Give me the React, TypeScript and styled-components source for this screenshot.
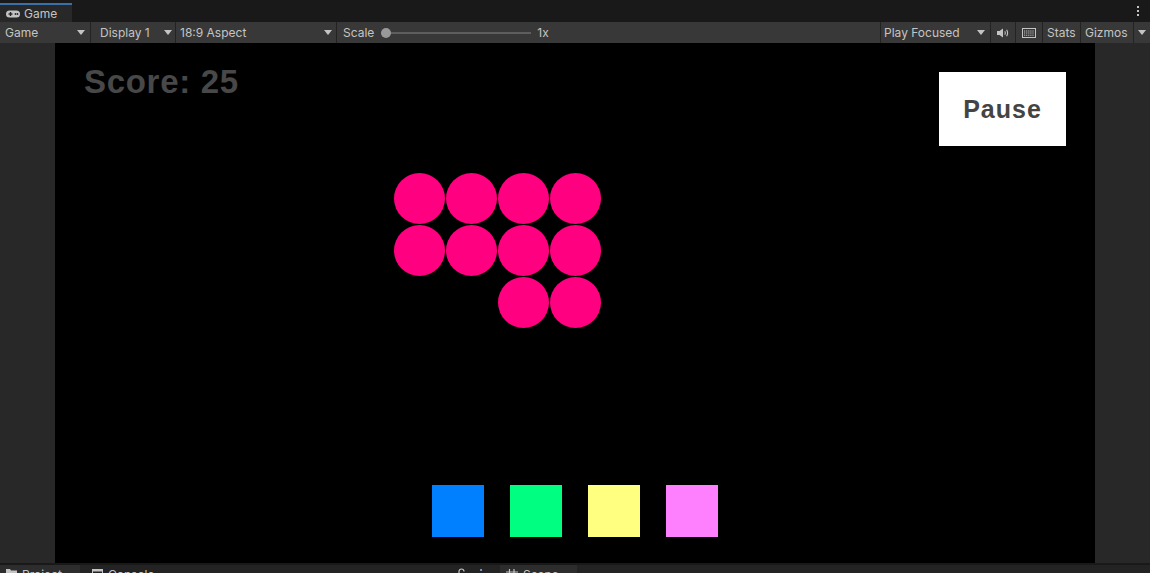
import styled, { createGlobalStyle } from "styled-components";

const GlobalStyle = createGlobalStyle`
  html, body {
    margin: 0;
    padding: 0;
    background: #191919;
    overflow: hidden;
  }
  #root {
    width: 1150px;
    height: 573px;
  }
`;

const Editor = styled.div`
  width: 1150px;
  height: 573px;
  display: flex;
  flex-direction: column;
  overflow: hidden;
  background: #191919;
  color: #c4c4c4;
  font-family: Inter, "Noto Sans", sans-serif;
  font-size: 12px;
`;

/* window tab bar ---------------------------------------------------- */
const TabBar = styled.div`
  height: 22px;
  flex: none;
  display: flex;
  align-items: flex-end;
  background: #191919;
`;

const WindowTab = styled.div`
  width: 72px;
  height: 19px;
  box-sizing: border-box;
  border-top: 2px solid #3a6fa8;
  background: #282828;
  display: flex;
  align-items: center;
  gap: 4px;
  padding-left: 6px;
  line-height: 1;
`;

const Kebab = styled.div`
  margin-left: auto;
  margin-right: 11px;
  align-self: center;
  display: flex;
  flex-direction: column;
  gap: 2px;

  span {
    width: 2px;
    height: 2px;
    background: #c4c4c4;
  }
`;

/* toolbar ---------------------------------------------------------- */
const Toolbar = styled.div`
  height: 21px;
  flex: none;
  display: flex;
  background: #383838;
`;

const ToolItem = styled.div<{ $w?: number; $pl?: number; $pr?: number; $last?: boolean }>`
  ${({ $w }) => ($w ? `width: ${$w}px; flex: none;` : "flex: 1;")}
  box-sizing: border-box;
  display: flex;
  align-items: center;
  padding-left: ${({ $pl }) => $pl ?? 0}px;
  padding-right: ${({ $pr }) => $pr ?? 0}px;
  border-right: ${({ $last }) => ($last ? "none" : "1px solid #232323")};
  white-space: nowrap;
  line-height: 1;
`;

const IconItem = styled(ToolItem)`
  justify-content: center;
  padding: 0;
`;

const Arrow = styled.span<{ $inline?: boolean }>`
  margin-left: ${({ $inline }) => ($inline ? "0" : "auto")};
  width: 0;
  height: 0;
  border-left: 4px solid transparent;
  border-right: 4px solid transparent;
  border-top: 5px solid #c4c4c4;
`;

const SliderTrack = styled.div`
  position: relative;
  width: 150px;
  height: 2px;
  margin-left: 7px;
  background: #5e5e5e;
`;

const SliderKnob = styled.div`
  position: absolute;
  left: 0;
  top: -4px;
  width: 10px;
  height: 10px;
  border-radius: 50%;
  background: #999999;
`;

const SliderValue = styled.span`
  margin-left: 6px;
`;

/* game view -------------------------------------------------------- */
const Main = styled.div`
  height: 520px;
  flex: none;
  display: flex;
`;

const SidePad = styled.div`
  width: 55px;
  flex: none;
  background: #282828;
`;

const GameView = styled.div`
  flex: 1;
  background: #000000;
  display: flex;
  flex-direction: column;
  font-family: "Liberation Sans", Arial, sans-serif;
  font-weight: bold;
`;

const Hud = styled.div`
  display: flex;
  justify-content: space-between;
  align-items: flex-start;
  padding: 22px 29px 0 29px;
`;

const Score = styled.div`
  font-size: 33px;
  line-height: 1;
  letter-spacing: 0.7px;
  color: #484848;
`;

const PauseButton = styled.div`
  width: 127px;
  height: 74px;
  margin-top: 7px;
  background: #ffffff;
  color: #444444;
  font-size: 25px;
  letter-spacing: 1px;
  display: flex;
  align-items: center;
  justify-content: center;
`;

const BlockGrid = styled.div`
  display: grid;
  grid-template-columns: repeat(4, 52px);
  grid-auto-rows: 52px;
  margin: 27px 0 0 339px;
`;

const Cell = styled.div`
  display: flex;
  align-items: flex-start;
  justify-content: flex-start;
`;

const Ball = styled.div`
  width: 51px;
  height: 51px;
  border-radius: 50%;
  background: #ff0080;
`;

const Palette = styled.div`
  margin-top: auto;
  padding-bottom: 26px;
  display: flex;
  justify-content: center;
  gap: 26px;
`;

const Swatch = styled.div<{ $color: string }>`
  width: 52px;
  height: 52px;
  background: ${({ $color }) => $color};
`;

/* bottom dock tabs ------------------------------------------------- */
const Dock = styled.div`
  flex: 1;
  border-top: 2px solid #191919;
  background: #232323;
  display: flex;
  overflow: hidden;
`;

const DockTab = styled.div<{ $w: number; $pl?: number; $active?: boolean }>`
  width: ${({ $w }) => $w}px;
  flex: none;
  box-sizing: border-box;
  background: ${({ $active }) => ($active ? "#2d2d2d" : "transparent")};
  display: flex;
  align-items: flex-start;
  gap: 5px;
  padding: 4px 0 0 ${({ $pl }) => $pl ?? 6}px;
  line-height: 1;
  white-space: nowrap;
`;

const DockTools = styled.div<{ $w: number }>`
  width: ${({ $w }) => $w}px;
  flex: none;
  display: flex;
  justify-content: flex-end;
  align-items: flex-start;
  gap: 9px;
  padding: 3px 13px 0 0;
  box-sizing: border-box;
  line-height: 1;
`;

const GamepadIcon = () => (
  <svg width="14" height="8" viewBox="0 0 14 8">
    <rect x="0" y="0.5" width="14" height="7" rx="3.5" fill="#c4c4c4" />
    <rect x="2.5" y="3.3" width="4" height="1.4" fill="#282828" />
    <rect x="3.8" y="2" width="1.4" height="4" fill="#282828" />
    <circle cx="9.5" cy="4" r="0.9" fill="#282828" />
    <circle cx="11.5" cy="4" r="0.9" fill="#282828" />
  </svg>
);

const AudioIcon = () => (
  <svg width="12" height="10" viewBox="0 0 12 10">
    <path d="M0 3 H2.5 L6 0.5 V9.5 L2.5 7 H0 Z" fill="#c4c4c4" />
    <path d="M7.8 3.2 Q9 5 7.8 6.8" stroke="#c4c4c4" strokeWidth="1.1" fill="none" />
    <path d="M9.6 1.8 Q11.6 5 9.6 8.2" stroke="#c4c4c4" strokeWidth="1.1" fill="none" />
  </svg>
);

const KeyboardIcon = () => (
  <svg width="14" height="10" viewBox="0 0 14 10">
    <rect x="0.5" y="0.5" width="13" height="9" fill="none" stroke="#c4c4c4" />
    <path d="M2 3 H12 M2 5 H12 M2 7.2 H12" stroke="#c4c4c4" strokeWidth="1" strokeDasharray="1.2 0.9" />
  </svg>
);

const FolderIcon = () => (
  <svg width="11" height="9" viewBox="0 0 11 9">
    <path d="M0 0 H4 L5 1.5 H11 V9 H0 Z" fill="#c4c4c4" />
  </svg>
);

const ConsoleIcon = () => (
  <svg width="11" height="9" viewBox="0 0 11 9">
    <rect x="0.5" y="0.5" width="10" height="8" fill="none" stroke="#c4c4c4" />
    <rect x="0.5" y="0.5" width="10" height="2" fill="#c4c4c4" />
  </svg>
);

const LockIcon = () => (
  <svg width="9" height="9" viewBox="0 0 9 9">
    <path d="M2 6 V3.5 A2.5 2.5 0 0 1 7 3.5" stroke="#c4c4c4" strokeWidth="1.2" fill="none" />
  </svg>
);

const SceneIcon = () => (
  <svg width="12" height="10" viewBox="0 0 12 10">
    <path d="M3.5 0 V10 M8 0 V10 M0 3 H12 M0 7 H12" stroke="#c4c4c4" strokeWidth="1.2" />
  </svg>
);

const cells = [1, 1, 1, 1, 1, 1, 1, 1, 0, 0, 1, 1];
const swatches = ["#0080ff", "#00ff80", "#ffff80", "#ff80ff"];

export default function App() {
  return (
    <>
      <GlobalStyle />
      <Editor>
        <TabBar>
          <WindowTab>
            <GamepadIcon />
            <span>Game</span>
          </WindowTab>
          <Kebab>
            <span />
            <span />
            <span />
          </Kebab>
        </TabBar>

        <Toolbar>
          <ToolItem $w={91} $pl={5} $pr={5}>
            Game
            <Arrow />
          </ToolItem>
          <ToolItem $w={85} $pl={9} $pr={3}>
            Display 1
            <Arrow />
          </ToolItem>
          <ToolItem $w={161} $pl={4} $pr={4}>
            18:9 Aspect
            <Arrow />
          </ToolItem>
          <ToolItem $pl={6}>
            Scale
            <SliderTrack>
              <SliderKnob />
            </SliderTrack>
            <SliderValue>1x</SliderValue>
          </ToolItem>
          <ToolItem $w={110} $pl={3} $pr={5}>
            Play Focused
            <Arrow />
          </ToolItem>
          <IconItem $w={25}>
            <AudioIcon />
          </IconItem>
          <IconItem $w={27}>
            <KeyboardIcon />
          </IconItem>
          <ToolItem $w={38} $pl={4}>
            Stats
          </ToolItem>
          <ToolItem $w={53} $pl={4}>
            Gizmos
          </ToolItem>
          <ToolItem $w={16} $pl={4} $last>
            <Arrow $inline />
          </ToolItem>
        </Toolbar>

        <Main>
          <SidePad />
          <GameView>
            <Hud>
              <Score>Score: 25</Score>
              <PauseButton>Pause</PauseButton>
            </Hud>
            <BlockGrid>
              {cells.map((filled, i) => (
                <Cell key={i}>{filled ? <Ball /> : null}</Cell>
              ))}
            </BlockGrid>
            <Palette>
              {swatches.map((c) => (
                <Swatch key={c} $color={c} />
              ))}
            </Palette>
          </GameView>
          <SidePad />
        </Main>

        <Dock>
          <DockTab $w={80} $active>
            <FolderIcon />
            <span>Project</span>
          </DockTab>
          <DockTab $w={120} $pl={12}>
            <ConsoleIcon />
            <span>Console</span>
          </DockTab>
          <DockTools $w={300}>
            <LockIcon />
            <span>⋮</span>
          </DockTools>
          <DockTab $w={77} $active>
            <SceneIcon />
            <span>Scene</span>
          </DockTab>
        </Dock>
      </Editor>
    </>
  );
}
